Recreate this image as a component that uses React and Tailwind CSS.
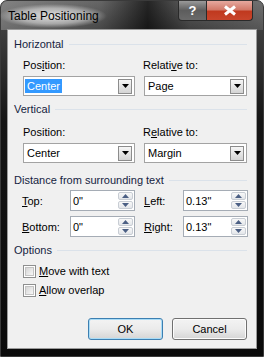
import React from "react";

function Header({ children }) {
  return (
    <div className="flex h-[14px] items-center pl-[6px] pr-[9px] text-[#15233f]">
      <span>{children}</span>
      <div className="ml-[5px] h-px flex-1 bg-[#dbe2ea]" />
    </div>
  );
}

function Key({ children }) {
  return <span className="underline underline-offset-[1px]">{children}</span>;
}

function Triangle({ down = true, color = "#000" }) {
  return (
    <svg width="7" height="4" viewBox="0 0 7 4">
      <path d={down ? "M0 0H7L3.5 4Z" : "M0 4H7L3.5 0Z"} fill={color} />
    </svg>
  );
}

function Select({ value, selected, className }) {
  return (
    <div className={`flex h-[20px] items-center border border-[#a3a3a3] bg-white ${className}`}>
      <div className="flex-1 pl-[1px]">
        {selected ? (
          <span className="inline-block bg-[#3399ff] px-[2px] leading-[14px] text-white">{value}</span>
        ) : (
          <span className="pl-[2px] leading-[14px]">{value}</span>
        )}
      </div>
      <div className="mr-[2px] flex h-[15px] w-[14px] items-center justify-center border border-[#8c8c8c] bg-gradient-to-b from-[#f6f6f6] to-[#d4d4d4]">
        <Triangle />
      </div>
    </div>
  );
}

function Spin({ value, className }) {
  return (
    <div className={`flex h-[21px] items-center border border-[#a5acb5] bg-white ${className}`}>
      <span className="flex-1 pl-[2px] leading-[14px]">{value}</span>
      <div className="mr-[1px] flex h-[17px] w-[15px] flex-col gap-px">
        <div className="flex flex-1 items-center justify-center rounded-[2px] border border-[#c8cdd4] bg-gradient-to-b from-[#f8f8f8] to-[#e3e6ea]">
          <Triangle down={false} color="#4b5f84" />
        </div>
        <div className="flex flex-1 items-center justify-center rounded-[2px] border border-[#c8cdd4] bg-gradient-to-b from-[#f8f8f8] to-[#e3e6ea]">
          <Triangle color="#4b5f84" />
        </div>
      </div>
    </div>
  );
}

function Check({ children }) {
  return (
    <div className="flex h-[14px] items-center pl-[15px]">
      <div className="flex h-[13px] w-[13px] items-center justify-center border border-[#8e8f8f] bg-white">
        <div className="h-[9px] w-[9px] border border-[#c3c3c3] bg-gradient-to-br from-[#d6d6d6] to-[#f7f7f7]" />
      </div>
      <span className="ml-[3px]">{children}</span>
    </div>
  );
}

function Button({ children, primary }) {
  return (
    <div
      className={`flex h-[22px] w-[75px] items-center justify-center rounded-[3px] border bg-gradient-to-b from-[#f3f3f3] via-[#ebebeb] to-[#d5d5d5] ${
        primary ? "border-[#3c7fb1] shadow-[inset_0_0_0_1px_#a9dcf7]" : "border-[#707070] shadow-[inset_0_0_0_1px_#fcfcfc]"
      }`}
    >
      {children}
    </div>
  );
}

export default function App() {
  return (
    <div className="h-[357px] w-[264px] bg-white font-['Liberation_Sans',Arial,sans-serif] text-[11px] text-black">
      <div className="relative flex h-[357px] w-[264px] flex-col rounded-t-[7px] border border-[#3a3a3a] bg-[linear-gradient(180deg,#6b6b6b_0px,#3d3d3d_30px,#151515_120px,#0a0a0a_357px)] px-[6px] pb-[7px]">
        {/* title bar */}
        <div className="absolute inset-x-0 top-0 h-[29px] rounded-t-[7px] bg-[linear-gradient(90deg,rgba(150,150,150,0.55)_0%,rgba(90,90,90,0.3)_38%,rgba(0,0,0,0.65)_56%,rgba(60,60,60,0.2)_72%,rgba(120,120,120,0.4)_100%)]" />
        <div className="relative flex h-[28px] items-start">
          <div className="relative mt-[8px] pl-[1px] text-[12px] leading-[14px] text-black">
            <div className="absolute -inset-x-[8px] -inset-y-[5px] rounded-[12px] bg-[radial-gradient(closest-side,rgba(255,255,255,0.8),rgba(255,255,255,0.45)_65%,rgba(255,255,255,0))]" />
            <span className="relative">Table Positioning</span>
          </div>
          <div className="ml-auto mr-[4px] flex h-[20px]">
            <div className="flex w-[29px] items-center justify-center rounded-bl-[4px] border border-t-0 border-[#2a2a2a] bg-gradient-to-b from-[#9a9a9a] via-[#5d5d5d] to-[#6a6a6a] text-[13px] font-bold text-white">
              ?
            </div>
            <div className="flex w-[46px] items-center justify-center rounded-br-[4px] border border-l-0 border-t-0 border-[#2a2a2a] bg-[linear-gradient(180deg,#e6a99f_0%,#d27a6a_45%,#c0391f_55%,#c8452c_100%)]">
              <svg width="14" height="11" viewBox="0 0 14 11">
                <path d="M2 1.5L12 9.5M12 1.5L2 9.5" stroke="#fff" strokeWidth="3" />
              </svg>
            </div>
          </div>
        </div>
        {/* client */}
        <div className="relative flex flex-1 flex-col border border-[#9a9a9a] bg-[#f0f0f0] pt-[7px] leading-[14px]">
          <Header>Horizontal</Header>
          <div className="mt-[7px] flex h-[14px]">
            <span className="ml-[15px] w-[120px]">
              Pos<Key>i</Key>tion:
            </span>
            <span>
              Relati<Key>v</Key>e to:
            </span>
          </div>
          <div className="mt-[4px] flex">
            <Select value="Center" selected className="ml-[15px] w-[112px]" />
            <Select value="Page" className="ml-[9px] w-[103px]" />
          </div>

          <div className="mt-[6px]">
            <Header>Vertical</Header>
          </div>
          <div className="mt-[9px] flex h-[14px]">
            <span className="ml-[15px] w-[120px]">Position:</span>
            <span>
              R<Key>e</Key>lative to:
            </span>
          </div>
          <div className="mt-[4px] flex">
            <Select value="Center" className="ml-[15px] w-[112px]" />
            <Select value="Margin" className="ml-[9px] w-[103px]" />
          </div>

          <div className="mt-[10px]">
            <Header>Distance from surrounding text</Header>
          </div>
          <div className="mt-[3px] flex items-center">
            <span className="ml-[14px] w-[48px]">
              <Key>T</Key>op:
            </span>
            <Spin value={'0"'} className="w-[65px]" />
            <span className="ml-[9px] w-[39px]">
              <Key>L</Key>eft:
            </span>
            <Spin value={'0.13"'} className="w-[65px]" />
          </div>
          <div className="mt-[5px] flex items-center">
            <span className="ml-[14px] w-[48px]">
              <Key>B</Key>ottom:
            </span>
            <Spin value={'0"'} className="w-[65px]" />
            <span className="ml-[9px] w-[39px]">
              <Key>R</Key>ight:
            </span>
            <Spin value={'0.13"'} className="w-[65px]" />
          </div>

          <div className="mt-[6px]">
            <Header>Options</Header>
          </div>
          <div className="mt-[7px]">
            <Check>
              <Key>M</Key>ove with text
            </Check>
          </div>
          <div className="mt-[5px]">
            <Check>
              <Key>A</Key>llow overlap
            </Check>
          </div>

          <div className="mt-auto mb-[8px] flex justify-end gap-[9px] pr-[9px]">
            <Button primary>OK</Button>
            <Button>Cancel</Button>
          </div>
        </div>
      </div>
    </div>
  );
}
